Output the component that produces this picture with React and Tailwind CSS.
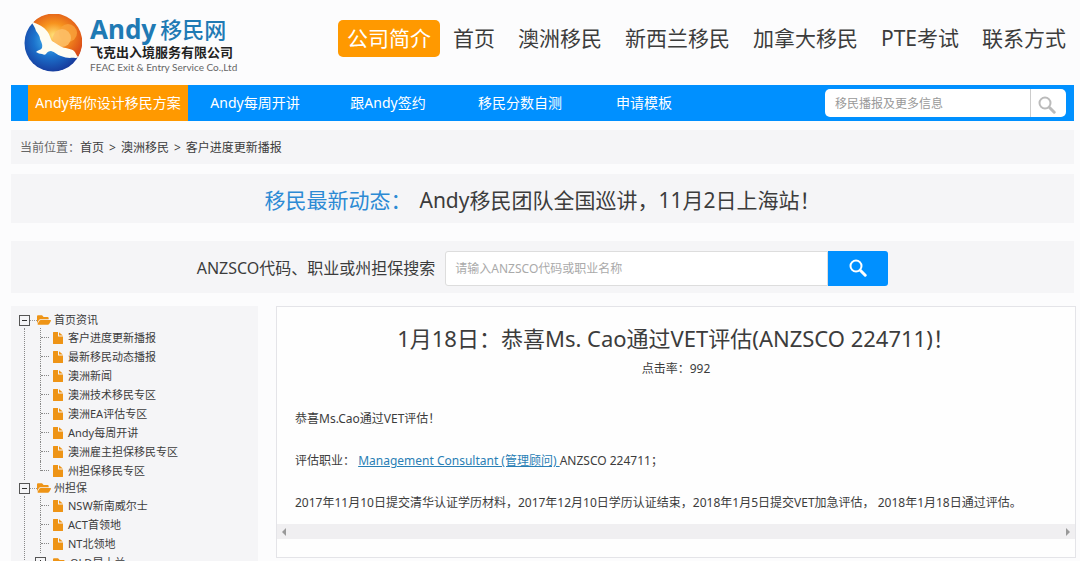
import React, { useState } from 'react';
import { FaFolderOpen } from 'react-icons/fa';

const mainNav = ['首页', '澳洲移民', '新西兰移民', '加拿大移民', 'PTE考试', '联系方式'];

const subNav = [
    { label: 'Andy帮你设计移民方案', className: 'w-40 bg-[#ff9900]' },
    { label: 'Andy每周开讲', className: 'w-[134px]' },
    { label: '跟Andy签约', className: 'w-[132px]' },
    { label: '移民分数自测', className: 'w-[132px]' },
    { label: '申请模板', className: 'w-[116px]' },
];

const tree = [
    {
        label: '首页资讯',
        items: [
            '客户进度更新播报',
            '最新移民动态播报',
            '澳洲新闻',
            '澳洲技术移民专区',
            '澳洲EA评估专区',
            'Andy每周开讲',
            '澳洲雇主担保移民专区',
            '州担保移民专区',
        ],
    },
    {
        label: '州担保',
        items: ['NSW新南威尔士', 'ACT首领地', 'NT北领地'],
        folders: ['QLD昆士兰'],
    },
];

const SearchIcon = ({ size }) => (
    <svg width={size} height={size} viewBox="0 0 18 18" fill="none" stroke="currentColor" aria-hidden="true">
        <circle cx="7" cy="7" r="5.5" strokeWidth="2" />
        <path d="M11.5 11.5 L16.2 16.2" strokeWidth="3" strokeLinecap="round" />
    </svg>
);

const FileIcon = () => (
    <svg width="10" height="12" viewBox="0 0 10 12" className="shrink-0 fill-[#ee9416]" aria-hidden="true">
        <path d="M0.6 0 H5 V4.4 H10 V11.4 Q10 12 9.4 12 H0.6 Q0 12 0 11.4 V0.6 Q0 0 0.6 0 Z" />
        <path d="M6 0.2 L9.8 3.6 H6 Z" />
    </svg>
);

const LogoMark = () => (
    <svg width="58" height="58" viewBox="0 0 58 58" className="shrink-0" aria-hidden="true">
        <defs>
            <radialGradient id="sky" cx="0.42" cy="0.5" r="0.62">
                <stop offset="0" stopColor="#ffe27a" />
                <stop offset="0.45" stopColor="#f7931e" />
                <stop offset="1" stopColor="#dc4f18" />
            </radialGradient>
            <radialGradient id="sea" cx="0.45" cy="0.45" r="0.58">
                <stop offset="0" stopColor="#4cc0f5" />
                <stop offset="0.5" stopColor="#1c72cc" />
                <stop offset="1" stopColor="#17389a" />
            </radialGradient>
        </defs>
        <circle cx="29" cy="29" r="28.5" fill="url(#sea)" />
        <path d="M9 8.5 A28.5 28.5 0 0 1 54 43 C46 42 38 38 30 32 C24 26 18 16 9 8.5 Z" fill="url(#sky)" />
        <circle cx="44" cy="19" r="9" fill="#f9a23c" opacity="0.8" />
        <circle cx="38" cy="24" r="9" fill="#fdc069" opacity="0.85" />
        <path
            d="M7 7 C12 10 18 11 22 16 C26 20 26 24 28 27 C31 29 33 30 36 32 C41 35 47 34 50 37 C52 39 52 41 54 43 C52 45 49 43 46 44 C43 44 40 43 37 42 C33 41 31 38 27 37 C25 37 23 38 22 40 C21 41 20 41 18 40 C16 40 14 39 12 38 C14 36 17 36 18 34 C19 30 17 28 16 25 C16 22 14 20 12 17 C11 13 9 11 7 7 Z"
            fill="#fffdf2"
        />
    </svg>
);

const Logo = () => (
    <a href="#" className="flex items-center gap-2">
        <LogoMark />
        <div className="flex flex-col pt-1 whitespace-nowrap">
            <div className="flex items-center gap-1 text-[#1f7ab4]">
                <span className="text-[26px] leading-[30px] font-bold">Andy</span>
                <span className="text-[22px] leading-[30px] font-medium">移民网</span>
            </div>
            <span className="text-[13px] leading-4 font-bold text-[#222]">飞克出入境服务有限公司</span>
            <span className="font-[Lato,sans-serif] text-[10px] leading-[15px] text-[#666]">FEAC Exit &amp; Entry Service Co.,Ltd</span>
        </div>
    </a>
);

const Toggle = ({ open, label, onClick }) => (
    <button
        type="button"
        aria-label={label}
        aria-expanded={open}
        onClick={onClick}
        className="relative z-10 flex items-center justify-center size-[11px] shrink-0 border border-[#555] bg-[#f5f5f7]"
    >
        <span className="w-[5px] h-px bg-[#333]" />
        {!open && <span className="absolute w-px h-[5px] bg-[#333]" />}
    </button>
);

const TreeGroup = ({ label, items, folders = [] }) => {
    const [open, setOpen] = useState(true);

    return (
        <li>
            <div className="flex items-center h-4">
                <Toggle open={open} label={label} onClick={() => setOpen(!open)} />
                <span className="w-[7px] border-t border-dotted border-[#999]" />
                <FaFolderOpen size={14} className="shrink-0 text-[#ee9416]" />
                <a href="#" className="ml-[3px]">{label}</a>
            </div>
            {open && (
                <ul className="ml-[5px] pl-[15px] border-l border-dotted border-[#888]">
                    {items.map((item, i) => {
                        const isLast = i === items.length - 1 && folders.length === 0;
                        return (
                            <li key={item} className="flex items-center h-[19px]">
                                <span className={`self-start border-l border-dotted border-[#888] ${isLast ? 'h-1/2' : 'h-full'}`} />
                                <span className="w-2 mr-1 border-t border-dotted border-[#888]" />
                                <FileIcon />
                                <a href="#" className="ml-[5px]">{item}</a>
                            </li>
                        );
                    })}
                    {folders.map((item) => (
                        <li key={item} className="flex items-center h-[19px] -ml-[5px]">
                            <Toggle open={false} label={item} />
                            <span className="w-[7px] border-t border-dotted border-[#999]" />
                            <FaFolderOpen size={14} className="shrink-0 text-[#ee9416]" />
                            <a href="#" className="ml-[3px]">{item}</a>
                        </li>
                    ))}
                </ul>
            )}
        </li>
    );
};

const Header = () => (
    <header className="flex items-center justify-between h-[85px] shrink-0 pl-6 pr-[14px]">
        <Logo />
        <nav className="flex items-center gap-[23px] pb-[9px] text-[21px] leading-[37px] whitespace-nowrap">
            <a href="#" className="-mr-[10px] px-[9px] rounded-[5px] bg-[#ff9900] text-white">公司简介</a>
            {mainNav.map((item) => (
                <a key={item} href="#">{item}</a>
            ))}
        </nav>
    </header>
);

const SubNav = () => (
    <div className="flex items-center justify-between h-9 shrink-0 ml-[11px] mr-1.5 pl-[17px] pr-2 bg-[#0090ff]">
        <nav className="flex text-sm text-white whitespace-nowrap">
            {subNav.map(({ label, className }) => (
                <a key={label} href="#" className={`${className} leading-9 text-center`}>{label}</a>
            ))}
        </nav>
        <form className="flex w-[241px] h-7 rounded-[5px] bg-white overflow-hidden">
            <input
                type="text"
                aria-label="移民播报及更多信息"
                placeholder="移民播报及更多信息"
                className="flex-1 min-w-0 pt-0.5 px-[10px] text-xs outline-none placeholder:text-[#999]"
            />
            <button type="button" aria-label="搜索" className="flex items-center justify-center w-9 pt-1 pr-1 border-l border-[#ccc] text-[#bbb]">
                <SearchIcon size={18} />
            </button>
        </form>
    </div>
);

const Article = () => (
    <main className="flex-1 min-w-0 self-start border border-[#e4e4e8] bg-[#fefefe]">
        <h1 className="pt-3 text-[22px] leading-[38px] text-center">1月18日：恭喜Ms. Cao通过VET评估(ANZSCO 224711)！</h1>
        <p className="pt-px leading-[22px] text-center">点击率：992</p>
        <div className="flex flex-col gap-[22px] pt-[29px] px-[18px] leading-5 whitespace-nowrap">
            <p>恭喜Ms.Cao通过VET评估！</p>
            <p>
                评估职业：&nbsp;
                <a href="#" className="text-[#2a7fb5] underline">Management Consultant (管理顾问)&nbsp;</a>
                ANZSCO 224711；
            </p>
            <p>2017年11月10日提交清华认证学历材料，2017年12月10日学历认证结束，2018年1月5日提交VET加急评估， 2018年1月18日通过评估。</p>
        </div>
        <div className="flex items-center justify-between h-[15px] mt-[11px] mb-[18px] px-[5px] bg-[#f0eff1]">
            <button type="button" aria-label="向左滚动" className="border-y-4 border-y-transparent border-r-4 border-r-[#999]" />
            <button type="button" aria-label="向右滚动" className="border-y-4 border-y-transparent border-l-4 border-l-[#999]" />
        </div>
    </main>
);

const App = () => {
    return (
        <div className="flex flex-col h-screen overflow-hidden bg-[#fcfcfd] font-['Noto_Sans','Noto_Sans_CJK_SC',sans-serif] text-xs text-[#3c3c3c]">
            <Header />
            <SubNav />

            <div className="flex items-center h-[34px] shrink-0 mt-[9px] ml-[11px] mr-1.5 pt-0.5 px-[9px] bg-[#f5f5f7]">
                <span className="text-[#666]">当前位置：</span>
                <nav className="flex gap-[5px]">
                    <a href="#">首页</a>
                    <span>&gt;</span>
                    <a href="#">澳洲移民</a>
                    <span>&gt;</span>
                    <a href="#">客户进度更新播报</a>
                </nav>
            </div>

            <div className="h-[49px] shrink-0 mt-2.5 ml-[11px] mr-1.5 bg-[#f5f5f7] text-[21px] leading-[52px] text-center whitespace-nowrap">
                <span className="text-[#2c8ad4]">移民最新动态：</span>
                <a href="#" className="ml-2">Andy移民团队全国巡讲，11月2日上海站！</a>
            </div>

            <form className="flex items-center justify-center h-[52px] shrink-0 mt-[18px] ml-[11px] mr-1.5 pt-0.5 bg-[#f5f5f7]">
                <label htmlFor="anzsco" className="mr-[10px] text-base">ANZSCO代码、职业或州担保搜索</label>
                <input
                    id="anzsco"
                    type="text"
                    placeholder="请输入ANZSCO代码或职业名称"
                    className="w-[383px] h-[35px] px-[9px] border border-[#ddd] rounded-l-[3px] bg-white outline-none placeholder:text-[#aaa]"
                />
                <button type="button" aria-label="搜索" className="flex items-center justify-center w-[60px] h-[35px] rounded-r-[3px] bg-[#0090ff] text-white">
                    <SearchIcon size={18} />
                </button>
            </form>

            <div className="flex flex-1 min-h-0 gap-[18px] mt-[13px] ml-[11px] mr-1">
                <aside className="w-[247px] shrink-0 pt-1.5 pl-2 bg-[#f5f5f7] text-[11px] leading-4 overflow-hidden">
                    <ul>
                        {tree.map((group) => (
                            <TreeGroup key={group.label} {...group} />
                        ))}
                    </ul>
                </aside>
                <Article />
            </div>
        </div>
    );
};

export default App;
